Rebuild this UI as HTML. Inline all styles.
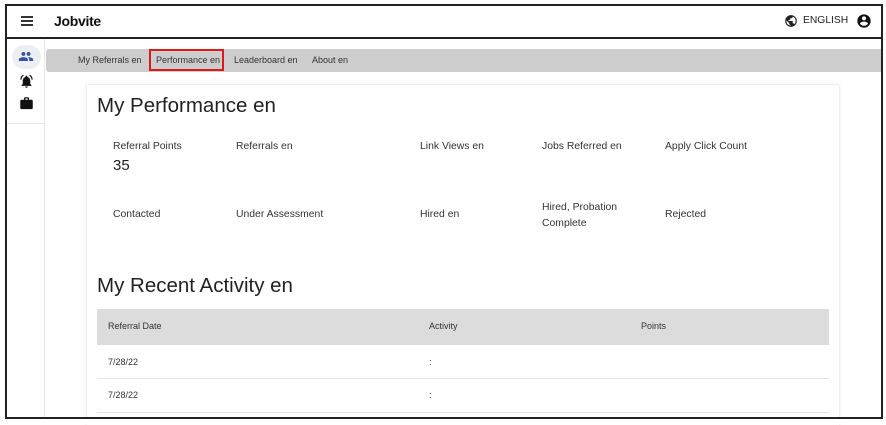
<!DOCTYPE html>
<html><head><meta charset="utf-8"><style>
*{margin:0;padding:0;box-sizing:border-box}
body{width:886px;height:424px;background:#fff;font-family:"Liberation Sans",Arial,sans-serif;position:relative;overflow:hidden;color:#333}
.a{position:absolute;white-space:nowrap}
.frame{position:absolute;left:5px;top:4px;width:878px;height:415px;border:2px solid #222;border-top-width:2px}
.t{font-size:9px;color:#333}
.m{font-size:10.4px;color:#333}
.s{font-size:9px;color:#333}
</style></head><body>
<div class="a" style="left:6px;top:37px;width:876px;height:2px;background:#222"></div>
<div class="a" style="left:21px;top:16px;width:12px;height:2px;background:#333"></div>
<div class="a" style="left:21px;top:20px;width:12px;height:2px;background:#333"></div>
<div class="a" style="left:21px;top:24px;width:12px;height:2px;background:#333"></div>
<div class="a" style="left:54px;top:13px;font-size:14px;font-weight:bold;color:#111;letter-spacing:-0.3px">Jobvite</div>
<svg class="a" style="left:784px;top:14px" width="14" height="14" viewBox="0 0 24 24"><path fill="#222" d="M12 2a10 10 0 100 20 10 10 0 000-20zm-1 17.9A8 8 0 014.1 10.9L9 15.8v1a2 2 0 002 2zm6.9-2.5A2 2 0 0016 16h-1v-3a1 1 0 00-1-1H8v-2h2a1 1 0 001-1V7h2a2 2 0 002-2v-.4a8 8 0 012.9 12.8z"/></svg>
<div class="a" style="left:803px;top:15px;font-size:10.3px;color:#222">ENGLISH</div>
<svg class="a" style="left:856px;top:13px" width="16" height="16" viewBox="0 0 24 24"><path fill="#111" d="M12 2a10 10 0 100 20 10 10 0 000-20zm0 3a3 3 0 110 6 3 3 0 010-6zm0 14.2a7.2 7.2 0 01-6-3.2c0-2 4-3.1 6-3.1s6 1.1 6 3.1a7.2 7.2 0 01-6 3.2z"/></svg>
<div class="a" style="left:44px;top:39px;width:1px;height:380px;background:#e6e6e6"></div>
<div class="a" style="left:6px;top:123px;width:38px;height:1px;background:#e6e6e6"></div>
<div class="a" style="left:12px;top:45px;width:29px;height:24px;border-radius:12px;background:#eceef2"></div>
<svg class="a" style="left:18px;top:50px" width="16" height="13" viewBox="0 0 24 20"><path fill="#3a55a0" d="M16 9a3 3 0 100-6 3 3 0 000 6zM8 9a3 3 0 100-6 3 3 0 000 6zm0 2c-2.3 0-7 1.2-7 3.5V17h14v-2.5C15 12.2 10.3 11 8 11zm8 0c-.3 0-.6 0-1 .1 1.2.8 2 2 2 3.4V17h6v-2.5c0-2.3-4.7-3.5-7-3.5z"/></svg>
<svg class="a" style="left:19px;top:74px" width="15" height="15" viewBox="0 0 24 24"><path fill="#111" d="M12 22a2 2 0 002-2h-4a2 2 0 002 2zm6-6v-5c0-3-1.6-5.6-4.5-6.3V4a1.5 1.5 0 00-3 0v.7C7.6 5.4 6 8 6 11v5l-2 2v1h16v-1zM7.6 2.6L6.2 1.2A10.4 10.4 0 002 9h2a8.4 8.4 0 013.6-6.4zM20 9h2a10.4 10.4 0 00-4.2-7.8l-1.4 1.4A8.4 8.4 0 0120 9z"/></svg>
<svg class="a" style="left:19px;top:96px" width="15" height="15" viewBox="0 0 24 24"><path fill="#111" d="M20 6h-4V4a2 2 0 00-2-2h-4a2 2 0 00-2 2v2H4a2 2 0 00-2 2v11a2 2 0 002 2h16a2 2 0 002-2V8a2 2 0 00-2-2zm-6 0h-4V4h4z"/></svg>
<div class="a" style="left:46px;top:49px;width:836px;height:23px;background:#cdcdcd;border-radius:3px 0 0 3px"></div>
<div class="a t" style="left:78px;top:55px">My Referrals en</div>
<div class="a" style="left:149px;top:49px;width:75px;height:22px;border:2px solid #d91b1b"></div>
<div class="a t" style="left:156px;top:55px">Performance en</div>
<div class="a t" style="left:234px;top:55px">Leaderboard en</div>
<div class="a t" style="left:312px;top:55px">About en</div>
<div class="a" style="left:87px;top:85px;width:752px;height:340px;background:#fff;box-shadow:0 0 3px rgba(0,0,0,.18)"></div>
<div class="a" style="left:97px;top:94px;font-size:20.5px;color:#222">My Performance en</div>
<div class="a m" style="left:113px;top:141px">Referral Points</div>
<div class="a" style="left:113px;top:157px;font-size:15px;color:#222">35</div>
<div class="a m" style="left:236px;top:141px">Referrals en</div>
<div class="a m" style="left:420px;top:141px">Link Views en</div>
<div class="a m" style="left:542px;top:141px">Jobs Referred en</div>
<div class="a m" style="left:665px;top:141px">Apply Click Count</div>
<div class="a m" style="left:113px;top:209px">Contacted</div>
<div class="a m" style="left:236px;top:209px">Under Assessment</div>
<div class="a m" style="left:420px;top:209px">Hired en</div>
<div class="a m" style="left:542px;top:200px;line-height:16px">Hired, Probation<br>Complete</div>
<div class="a m" style="left:665px;top:209px">Rejected</div>
<div class="a" style="left:97px;top:274px;font-size:20.5px;color:#222">My Recent Activity en</div>
<div class="a" style="left:97px;top:309px;width:732px;height:36px;background:#dcdcdc"></div>
<div class="a s" style="left:108px;top:321px">Referral Date</div>
<div class="a s" style="left:429px;top:321px">Activity</div>
<div class="a s" style="left:641px;top:321px">Points</div>
<div class="a s" style="left:108px;top:357px">7/28/22</div>
<div class="a s" style="left:429px;top:357px">:</div>
<div class="a" style="left:97px;top:378px;width:732px;height:1px;background:#e4e4e4"></div>
<div class="a s" style="left:108px;top:390px">7/28/22</div>
<div class="a s" style="left:429px;top:390px">:</div>
<div class="a" style="left:97px;top:412px;width:732px;height:1px;background:#e4e4e4"></div>
<div class="a" style="left:0;top:419px;width:886px;height:5px;background:#fff"></div>
<div class="a" style="left:883px;top:0;width:3px;height:424px;background:#fff"></div>
<div class="frame"></div>
</body></html>
